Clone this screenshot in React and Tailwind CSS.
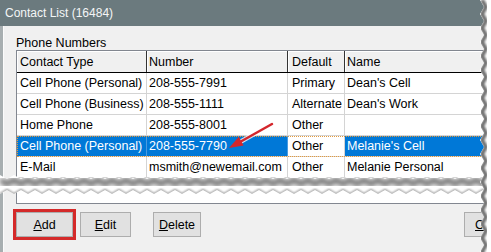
import React from "react";

const rows = [
  ["Cell Phone (Personal)", "208-555-7991", "Primary", "Dean's Cell"],
  ["Cell Phone (Business)", "208-555-1111", "Alternate", "Dean's Work"],
  ["Home Phone", "208-555-8001", "Other", ""],
  ["Cell Phone (Personal)", "208-555-7790", "Other", "Melanie's Cell", true],
  ["E-Mail", "msmith@newemail.com", "Other", "Melanie Personal"],
];

const widths = ["w-[130px]", "w-[141px]", "w-[57px]", "flex-1"];
const pads = ["pl-[3px]", "pl-[2px]", "pl-[4px]", "pl-[2px]"];

function zig(n, step, a, b, vertical) {
  const pts = [];
  for (let i = 0; i <= n; i++) {
    const p = i * step;
    const q = i % 2 ? b : a;
    pts.push(vertical ? [q, p] : [p, q]);
  }
  return pts;
}

const toStr = (pts) => pts.map((p) => p.join(",")).join(" ");

function Overlay() {
  const top = zig(71, 7, 175, 179, false);
  const bot = zig(71, 7, 194, 190, false);
  const gap = toStr([...top, ...[...bot].reverse()]);
  const topShadow = toStr(top.map(([x, y]) => [x, y + 5]));
  const right = zig(37, 7, 480, 484, true);
  const rightPoly = toStr([[491, 0], ...right, [491, 259]]);
  const rightShadow = toStr(right.map(([x, y]) => [x + 2, y]));

  return (
    <svg className="absolute inset-0 pointer-events-none" width="491" height="252" viewBox="0 0 491 252">
      <defs>
        <filter id="blur3" x="-20%" y="-50%" width="140%" height="200%">
          <feGaussianBlur stdDeviation="2.5" />
        </filter>
        <filter id="blur1" x="-20%" y="-50%" width="140%" height="200%">
          <feGaussianBlur stdDeviation="1" />
        </filter>
        <clipPath id="gapClip">
          <polygon points={gap} />
        </clipPath>
        <clipPath id="rightClip">
          <polygon points={rightPoly} />
        </clipPath>
      </defs>

      {/* horizontal tear */}
      <polygon points={gap} fill="#ffffff" />
      <g clipPath="url(#gapClip)">
        <polyline points={topShadow} fill="none" stroke="#777777" strokeWidth="6" filter="url(#blur3)" />
        <polyline points={toStr(bot)} fill="none" stroke="#959595" strokeWidth="2" filter="url(#blur1)" />
      </g>

      {/* right tear */}
      <polygon points={rightPoly} fill="#ffffff" />
      <g clipPath="url(#rightClip)">
        <polyline points={rightShadow} fill="none" stroke="#6e6e6e" strokeWidth="4" filter="url(#blur1)" />
      </g>

      {/* red arrow */}
      <g>
        <line x1="272" y1="124" x2="240" y2="142" stroke="#ffffff" strokeOpacity="0.8" strokeWidth="4.5" strokeLinecap="round" />
        <line x1="272" y1="124" x2="240" y2="142" stroke="#d4262c" strokeWidth="2.5" strokeLinecap="round" />
        <polygon points="229,148 238.8,136.8 243.6,145.4" fill="#d4262c" />
      </g>
    </svg>
  );
}

function Row({ cells, selected }) {
  return (
    <div
      className={
        "flex h-[21px] border-b border-[#d4d4d4] " +
        (selected ? "outline outline-1 outline-dotted outline-[#e59a3c] -outline-offset-1" : "")
      }
    >
      {cells.map((c, i) => {
        const blue = selected && i !== 2;
        return (
          <div
            key={i}
            className={
              "flex items-center whitespace-nowrap overflow-hidden border-r " +
              widths[i] +
              " " +
              pads[i] +
              " " +
              (blue ? "bg-[#0078d7] text-white border-[#4a9be0]" : "bg-white text-black border-[#d4d4d4]")
            }
          >
            {c}
          </div>
        );
      })}
    </div>
  );
}

function Btn({ children, className }) {
  return (
    <button className={"h-[25px] shrink-0 bg-[#e1e1e1] border border-[#adadad] text-[12.5px] text-black " + className}>
      {children}
    </button>
  );
}

export default function App() {
  return (
    <div className="relative w-[491px] h-[252px] overflow-hidden bg-white [font-family:'Liberation_Sans',Arial,sans-serif] text-[12.5px] leading-[14px]">
      <div className="h-full flex flex-col">
        <div className="h-[26px] shrink-0 bg-[#6b7a7e] text-[#f4f6f6] text-[12px] pl-[5px] flex items-center">
          Contact List (16484)
        </div>
        <div className="flex flex-1 bg-[#f0f0f0]">
          <div className="w-[4px] bg-[#a7aeb0] border-r border-[#fbfbfb]" />
          <div className="flex-1 min-w-0 pl-[12px] pt-[10px] flex flex-col">
            <div className="h-[14px] text-black">Phone Numbers</div>
            <div className="h-[154px] border border-r-0 border-[#828790] bg-white overflow-hidden">
              <div className="flex h-[22px] border-b border-black">
                {["Contact Type", "Number", "Default", "Name"].map((h, i) => (
                  <div
                    key={h}
                    className={
                      "flex items-center bg-[#f0f0f0] border-r border-[#333] shadow-[inset_1px_1px_0_#ffffff] " +
                      widths[i] +
                      " " +
                      pads[i]
                    }
                  >
                    {h}
                  </div>
                ))}
              </div>
              {rows.map((r, i) => (
                <Row key={i} cells={r.slice(0, 4)} selected={r[4]} />
              ))}
            </div>
            <div className="flex mt-[8px] items-center">
              <Btn className="w-[57px] outline-[3px] outline-solid outline-[#d42a2a]">
                <span className="underline">A</span>dd
              </Btn>
              <Btn className="w-[51px] ml-[7px]">
                <span className="underline">E</span>dit
              </Btn>
              <Btn className="w-[48px] ml-[22px]">
                <span className="underline">D</span>elete
              </Btn>
              <Btn className="w-[24px] ml-[263px] text-left pl-[10px] overflow-hidden whitespace-nowrap">
                <span className="underline">C</span>
              </Btn>
            </div>
          </div>
        </div>
      </div>
      <Overlay />
    </div>
  );
}
